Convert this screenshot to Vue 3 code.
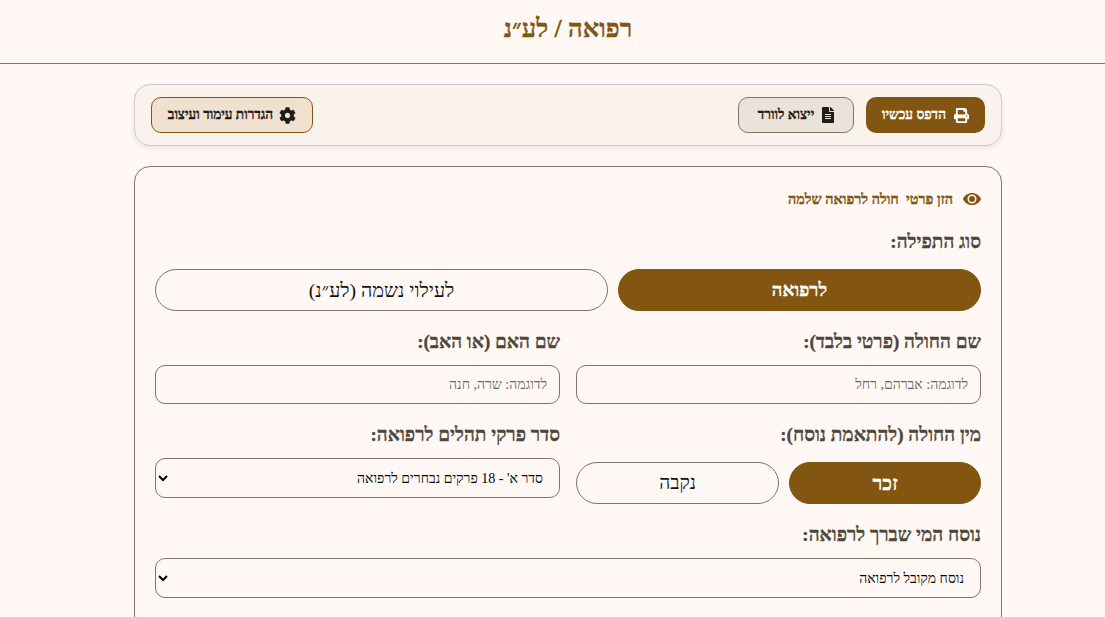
<script setup>
import { ref } from 'vue'
const prayerType = ref('refua')
const gender = ref('m')
const order = ref('a')
const nusach = ref('m')
</script>

<template>
  <div class="page" dir="rtl">
    <header class="top"><h1>רפואה / לע״נ</h1></header>
    <main class="wrap">
      <div class="toolbar">
        <div class="tb-group">
          <button class="tb-btn print">
            <svg viewBox="0 0 512 512" class="ic prn"><path fill="currentColor" d="M448 192V77.250c0-8.490-3.370-16.620-9.370-22.630L393.370 9.370c-6-6-14.140-9.370-22.630-9.370H96C78.330 0 64 14.330 64 32v160c-35.350 0-64 28.650-64 64v112c0 8.840 7.160 16 16 16h48v96c0 17.670 14.330 32 32 32h320c17.670 0 32-14.330 32-32v-96h48c8.840 0 16-7.160 16-16V256c0-35.350-28.650-64-64-64zm-64 256H128v-96h256v96zm0-224H128V64h192v48c0 8.840 7.160 16 16 16h48v96zm48 72c-13.250 0-24-10.750-24-24 0-13.260 10.750-24 24-24s24 10.740 24 24c0 13.250-10.750 24-24 24z"/></svg>
            <span>הדפס עכשיו</span>
          </button>
          <button class="tb-btn word">
            <svg viewBox="0 0 384 512" class="ic file"><path fill="currentColor" d="M224 136V0H24C10.700 0 0 10.700 0 24v464c0 13.300 10.700 24 24 24h336c13.300 0 24-10.700 24-24V160H248c-13.200 0-24-10.800-24-24zm64 236c0 6.600-5.400 12-12 12H108c-6.600 0-12-5.400-12-12v-8c0-6.600 5.400-12 12-12h168c6.600 0 12 5.400 12 12v8zm0-64c0 6.600-5.400 12-12 12H108c-6.600 0-12-5.400-12-12v-8c0-6.600 5.400-12 12-12h168c6.600 0 12 5.400 12 12v8zm0-72v8c0 6.600-5.400 12-12 12H108c-6.600 0-12-5.400-12-12v-8c0-6.600 5.400-12 12-12h168c6.600 0 12 5.400 12 12zm96-114.100v6.100H256V0h6.100c6.400 0 12.500 2.500 17 7l97.900 98c4.500 4.500 7 10.600 7 16.900z"/></svg>
            <span>ייצוא לוורד</span>
          </button>
        </div>
        <button class="tb-btn settings">
          <svg viewBox="0 0 512 512" class="ic gear"><path fill="currentColor" d="M487.400 315.700l-42.600-24.600c4.300-23.200 4.300-47 0-70.200l42.600-24.600c4.900-2.800 7.100-8.600 5.500-14-11.100-35.600-30-67.800-54.700-94.600-3.800-4.100-10-5.100-14.800-2.300L380.800 110c-17.900-15.400-38.500-27.300-60.800-35.100V25.800c0-5.600-3.900-10.500-9.400-11.700-36.700-8.200-74.300-7.800-109.200 0-5.500 1.200-9.400 6.100-9.400 11.700V75c-22.200 7.900-42.800 19.800-60.800 35.100L88.700 85.500c-4.900-2.800-11-1.900-14.800 2.300-24.700 26.700-43.600 58.900-54.700 94.600-1.700 5.400.6 11.200 5.500 14L67.300 221c-4.300 23.200-4.300 47 0 70.200l-42.600 24.600c-4.900 2.800-7.100 8.600-5.500 14 11.100 35.600 30 67.800 54.700 94.600 3.800 4.100 10 5.100 14.800 2.300l42.600-24.600c17.900 15.400 38.500 27.300 60.800 35.100v49.200c0 5.600 3.900 10.500 9.400 11.700 36.700 8.200 74.300 7.800 109.200 0 5.500-1.200 9.400-6.100 9.400-11.700v-49.200c22.200-7.900 42.800-19.800 60.800-35.100l42.600 24.600c4.900 2.800 11 1.900 14.800-2.300 24.700-26.700 43.600-58.900 54.700-94.600 1.500-5.500-.7-11.300-5.600-14.100zM256 336c-44.100 0-80-35.900-80-80s35.900-80 80-80 80 35.900 80 80-35.900 80-80 80z"/></svg>
            <span>הגדרות עימוד ועיצוב</span>
        </button>
      </div>

      <section class="card">
        <div class="hint">
          <svg viewBox="0 0 576 512" class="eye"><path fill="currentColor" d="M572.520 241.400C518.290 135.590 410.930 64 288 64S57.680 135.640 3.480 241.410a32.350 32.350 0 0 0 0 29.190C57.710 376.410 165.070 448 288 448s230.320-71.640 284.520-177.410a32.350 32.350 0 0 0 0-29.190zM288 400a144 144 0 1 1 144-144 143.930 143.930 0 0 1-144 144zm0-240a96 96 0 1 0 0 192 96 96 0 1 0 0-192z"/></svg>
          <span>הזן פרטי &nbsp;חולה לרפואה שלמה</span>
        </div>

        <div class="label first">סוג התפילה:</div>
        <div class="pills">
          <button class="pill on" @click="prayerType = 'refua'">לרפואה</button>
          <button class="pill" @click="prayerType = 'neshama'">לעילוי נשמה (לע״נ)</button>
        </div>

        <div class="two r2">
          <div>
            <div class="label">שם החולה (פרטי בלבד):</div>
            <input class="field" placeholder="לדוגמה: אברהם, רחל" />
          </div>
          <div>
            <div class="label">שם האם (או האב):</div>
            <input class="field" placeholder="לדוגמה: שרה, חנה" />
          </div>
        </div>

        <div class="two r3">
          <div>
            <div class="label">מין החולה (להתאמת נוסח):</div>
            <div class="pills gender">
              <button class="pill on" @click="gender = 'm'">זכר</button>
              <button class="pill" @click="gender = 'f'">נקבה</button>
            </div>
          </div>
          <div>
            <div class="label">סדר פרקי תהלים לרפואה:</div>
            <select class="field sel" v-model="order">
              <option value="a">סדר א' - 18 פרקים נבחרים לרפואה</option>
            </select>
          </div>
        </div>

        <div class="r4">
          <div class="label">נוסח המי שברך לרפואה:</div>
          <select class="field sel" v-model="nusach">
            <option value="m">נוסח מקובל לרפואה</option>
          </select>
        </div>
      </section>
    </main>
  </div>
</template>

<style>
html, body { margin: 0; background: #fff8f5; overflow: hidden; }
</style>

<style scoped>
.page {
  width: 1136px;
  height: 617px;
  overflow: hidden;
  background: #fff8f5;
  font-family: "Liberation Serif", serif;
  color: #1f1b16;
  text-rendering: optimizeSpeed;
}
.top {
  height: 63px;
  border-bottom: 1px solid #7f7667;
  display: flex;
  align-items: center;
  justify-content: center;
}
.top h1 {
  margin: 0 0 6px;
  font-size: 25.6px;
  font-weight: 700;
  color: #825510;
  -webkit-text-stroke: 0.3px #825510;
}
.wrap {
  width: 868px;
  margin: 20px auto 0;
}
.toolbar {
  box-sizing: border-box;
  height: 62px;
  border: 1px solid #d0c8d4;
  border-radius: 16px;
  background: #faf2ec;
  box-shadow: 0 2px 6px rgba(0, 0, 0, 0.08);
  padding: 0 16px;
  display: flex;
  align-items: center;
  justify-content: space-between;
}
.tb-group { display: flex; gap: 12px; }
.tb-btn {
  box-sizing: border-box;
  height: 36px;
  border-radius: 10px;
  padding: 0;
  display: flex;
  align-items: center;
  justify-content: center;
  gap: 8px;
  font-family: inherit;
  font-size: 13.6px;
  font-weight: 700;
  border: 1px solid transparent;
  -webkit-text-stroke: 0.35px currentColor;
}
.ic { width: 16px; height: 16px; flex: none; }
.prn { width: 15px; height: 15px; }
.file { width: 12px; }
.gear { width: 17px; height: 17px; }
.print { background: #825510; color: #fff; width: 119px; border: 0; }
.word { background: #ebe3d9; color: #1f1b16; border-color: #7f7667; width: 116px; }
.settings { background: #efe0d0; color: #1f1b16; border-color: #825510; width: 162px; gap: 6px; }
.card {
  box-sizing: border-box;
  margin-top: 20px;
  height: 480px;
  border: 1px solid #7f7667;
  border-radius: 16px;
  padding: 24px 20px 0;
}
.hint {
  display: flex;
  align-items: center;
  gap: 10px;
  font-size: 14.4px;
  font-weight: 700;
  color: #825510;
  height: 16px;
  -webkit-text-stroke: 0.35px #825510;
}
.eye { width: 18px; height: 16px; flex: none; color: #825510; }
.label {
  font-size: 19px;
  font-weight: 700;
  color: #4d4639;
  line-height: 24px;
  margin-bottom: 15px;
  -webkit-text-stroke: 0.3px #4d4639;
}
.label.first { margin-top: 23px; margin-bottom: 15px; }
.pills { display: flex; gap: 10px; }
.pill {
  flex: 1 1 auto;
  box-sizing: border-box;
  height: 42px;
  border-radius: 21px;
  border: 1px solid #7f7667;
  background: transparent;
  font-family: inherit;
  font-size: 19.7px;
  color: #111;
  padding: 0;
}
.pill.on {
  background: #825510;
  border-color: #825510;
  color: #fff;
  font-size: 18.6px;
  font-weight: 700;
  -webkit-text-stroke: 0.3px #fff;
}
.gender .pill { font-size: 19.2px; }
.gender .pill.on { font-size: 20px; }
.two {
  display: grid;
  grid-template-columns: 1fr 1fr;
  column-gap: 16px;
}
.r2 { margin-top: 19px; }
.r2 .label { margin-bottom: 11px; }
.r3 { margin-top: 19px; }
.r3 .label { margin-bottom: 11px; }
.r4 { margin-top: 19px; }
.r4 .label { margin-bottom: 11px; }
.gender { margin-top: 15px; }
.field {
  display: block;
  box-sizing: border-box;
  width: 100%;
  height: 39px;
  border: 1px solid #7f7667;
  border-radius: 10px;
  background: transparent;
  padding: 0 12px;
  font-family: inherit;
  font-size: 14px;
  color: #000;
  outline: none;
}
.field::placeholder { color: #666; }
.sel { height: 40px; }
</style>
